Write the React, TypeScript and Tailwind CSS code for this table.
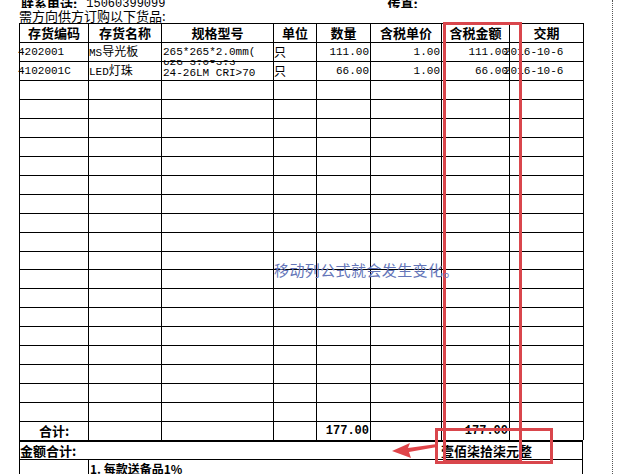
import React from "react";

const COLS = [
  "w-[70px] border-l",
  "w-[73px]",
  "w-[112px]",
  "w-[43px]",
  "w-[54px]",
  "w-[71px]",
  "w-[68px]",
  "w-[74px]",
];

const MONO = "font-['Liberation_Mono','Noto_Sans_CJK_SC',monospace]";
const CJK = "font-['Noto_Sans_CJK_SC','Liberation_Sans',sans-serif]";

type Cell = { content?: React.ReactNode; align?: "left" | "right" | "center"; extra?: string };

function Row({ cells, h, top }: { cells: Cell[]; h: string; top?: boolean }) {
  return (
    <div className={`flex w-fit ${h} ${top ? "border-t border-black" : ""}`}>
      {COLS.map((c, i) => {
        const cell = cells[i] || {};
        const al =
          cell.align === "right"
            ? "justify-end"
            : cell.align === "center"
            ? "justify-center"
            : "justify-start";
        return (
          <div
            key={i}
            className={`${c} shrink-0 border-r border-b border-black flex items-center ${al} relative ${cell.extra || ""}`}
          >
            {cell.content}
          </div>
        );
      })}
    </div>
  );
}

const Num = ({ v }: { v: string }) => <span className={`text-[11px] pr-[1px] ${MONO}`}>{v}</span>;

export default function App() {
  const header = ["存货编码", "存货名称", "规格型号", "单位", "数量", "含税单价", "含税金额", "交期"];
  const bodyEmpty = Array.from({ length: 18 });

  return (
    <div className="relative w-[633px] h-[474px] overflow-hidden bg-white text-black">
      {/* clipped first line */}
      <div className="h-[8px] overflow-hidden flex items-end pl-[21px]">
        <div className="flex items-end leading-[14px] text-[13px] mb-[-3px]">
          <span className={`font-bold ${CJK}`}>联系电话:</span>
          <span className={`ml-[9px] text-[12px] ${MONO}`}>15060399099</span>
          <span className={`ml-[222px] font-bold ${CJK}`}>传真:</span>
        </div>
      </div>
      <div className={`h-[15px] pl-[19px] pt-[1px] text-[13px] leading-[14px] ${CJK}`}>需方向供方订购以下货品:</div>

      {/* table */}
      <div className="pl-[19px]">
        <Row
          top
          h="h-[20px]"
          cells={header.map((t) => ({
            content: <span className={`font-bold text-[13px] leading-[14px] ${CJK}`}>{t}</span>,
            align: "center",
          }))}
        />
        <Row
          h="h-[19px]"
          cells={[
            { content: <span className={`text-[11px] ml-[-2px] ${MONO}`}>4202001</span> },
            {
              content: (
                <span className={`text-[11px] ${MONO}`}>
                  MS<span className={`text-[12px] ${CJK}`}>导光板</span>
                </span>
              ),
            },
            {
              content: (
                <div className={`absolute left-[1px] top-[-9px] text-[11px] leading-[12px] whitespace-nowrap ${MONO}`}>
                  <div>3.0-3.3V 60</div>
                  <div>265*265*2.0mm(</div>
                  <div>LED 2835 24</div>
                </div>
              ),
              extra: "overflow-hidden",
            },
            { content: <span className={`text-[12px] ${CJK}`}>只</span> },
            { content: <Num v="111.00" />, align: "right" },
            { content: <Num v="1.00" />, align: "right" },
            { content: <Num v="111.00" />, align: "right" },
            { content: <span className={`text-[11px] ml-[-6px] whitespace-nowrap ${MONO}`}>2016-10-6</span> },
          ]}
        />
        <Row
          h="h-[19px]"
          cells={[
            { content: <span className={`text-[11px] ml-[-2px] ${MONO}`}>4102001C</span> },
            {
              content: (
                <span className={`text-[11px] ${MONO}`}>
                  LED<span className={`text-[12px] ${CJK}`}>灯珠</span>
                </span>
              ),
            },
            {
              content: (
                <div className={`absolute left-[1px] top-[-5px] text-[11px] leading-[11px] whitespace-nowrap ${MONO}`}>
                  <div>62G 3.0-3.3</div>
                  <div>24-26LM CRI&gt;70</div>
                </div>
              ),
              extra: "overflow-hidden",
            },
            { content: <span className={`text-[12px] ${CJK}`}>只</span> },
            { content: <Num v="66.00" />, align: "right" },
            { content: <Num v="1.00" />, align: "right" },
            { content: <Num v="66.00" />, align: "right" },
            { content: <span className={`text-[11px] ml-[-6px] whitespace-nowrap ${MONO}`}>2016-10-6</span> },
          ]}
        />
        {bodyEmpty.map((_, i) => (
          <Row key={i} h={i === 9 ? "h-[18px]" : "h-[19px]"} cells={[]} />
        ))}
        {/* 合计 row */}
        <div className="flex w-fit h-[18px]">
          {COLS.map((c, i) => (
            <div
              key={i}
              className={`${c} shrink-0 border-r border-black flex items-center ${i === 0 ? "justify-center" : "justify-end"}`}
            >
              {i === 0 && <span className={`font-bold text-[13px] leading-[14px] ${CJK}`}>合计:</span>}
              {(i === 4 || i === 6) && <span className={`font-bold text-[12px] pr-[1px] ${MONO}`}>177.00</span>}
            </div>
          ))}
        </div>
        {/* 金额合计 row */}
        <div className="w-[564px] h-[20px] border-t-2 border-l border-r border-b border-black flex items-center">
          <span className={`font-bold text-[13px] leading-[14px] w-[421px] ${CJK}`}>金额合计:</span>
          <span className={`font-bold text-[13px] leading-[14px] ${CJK}`}>壹佰柒拾柒元整</span>
        </div>
        <div className="flex h-[20px] w-[564px] border-l border-r border-black">
          <div className="w-[69px] border-r border-black" />
          <div className="flex items-start pt-[2px] pl-[1px]">
            <span className={`font-bold text-[12px] leading-[13px] ${CJK}`}>1. 每款送备品1%</span>
          </div>
        </div>
      </div>

      {/* overlays */}
      <div className="absolute left-[612px] top-0 h-[474px] border-l border-dotted border-[#555]" />
      <div className="absolute left-[443px] top-[22px] w-[79px] h-[441px] border-[3px] border-[#d9464c]" />
      <div className="absolute left-[435px] top-[428px] w-[118px] h-[36px] border-[3px] border-[#d9464c]" />
      <div
        className={`absolute left-[274px] top-[260px] text-[15px] leading-[20px] tracking-[0.4px] text-[#6475b8] whitespace-nowrap ${CJK}`}
      >
        移动列公式就会发生变化。
      </div>
      <svg className="absolute left-[388px] top-[438px]" width="52" height="24" viewBox="0 0 52 24">
        <polygon points="4,13 22,5 20,10 49,6 49,9 21,14 23,20" fill="#e0454a" />
      </svg>
    </div>
  );
}
